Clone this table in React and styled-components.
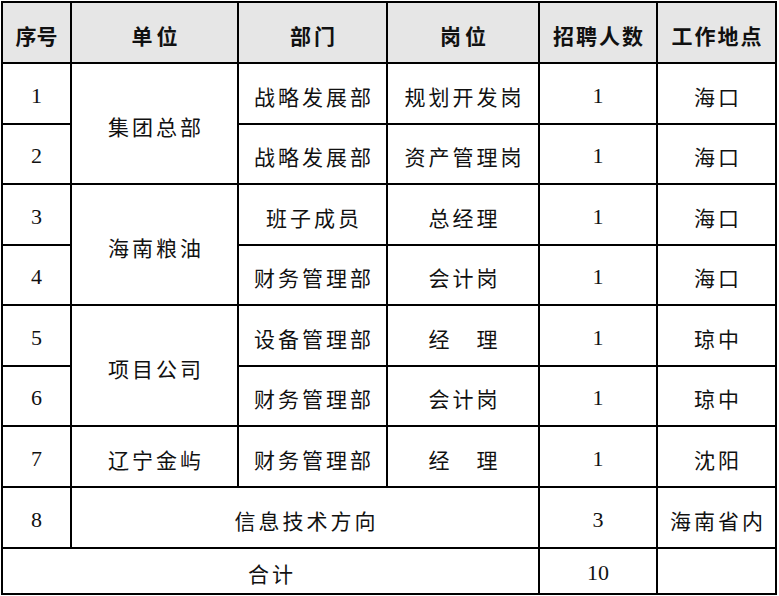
import React from 'react'
import styled, { createGlobalStyle } from 'styled-components';

const GlobalStyle = createGlobalStyle`
    html, body { margin: 0; padding: 0; background: #fff; }
    body { font-family: "Liberation Serif", "Noto Sans CJK SC", serif; color: #111; }
`;

const rows = [
    { no: '1', unit: '集团总部', span: 2, dept: '战略发展部', post: '规划开发岗', count: '1', place: '海口' },
    { no: '2', dept: '战略发展部', post: '资产管理岗', count: '1', place: '海口' },
    { no: '3', unit: '海南粮油', span: 2, dept: '班子成员', post: '总经理', count: '1', place: '海口' },
    { no: '4', dept: '财务管理部', post: '会计岗', count: '1', place: '海口' },
    { no: '5', unit: '项目公司', span: 2, dept: '设备管理部', post: '经　理', count: '1', place: '琼中' },
    { no: '6', dept: '财务管理部', post: '会计岗', count: '1', place: '琼中' },
    { no: '7', unit: '辽宁金屿', span: 1, dept: '财务管理部', post: '经　理', count: '1', place: '沈阳' },
];

export default function App() {
    return (
        <Page>
            <GlobalStyle />
            <Table>
                <colgroup>
                    <col style={{ width: 69 }} />
                    <col style={{ width: 167 }} />
                    <col style={{ width: 149 }} />
                    <col style={{ width: 152 }} />
                    <col style={{ width: 118 }} />
                    <col style={{ width: 119 }} />
                </colgroup>
                <thead>
                    <Row $h={61}>
                        <HeadCell $gap={0}>序号</HeadCell>
                        <HeadCell $gap={4}>单位</HeadCell>
                        <HeadCell $gap={3}>部门</HeadCell>
                        <HeadCell $gap={4}>岗位</HeadCell>
                        <HeadCell $gap={2}>招聘人数</HeadCell>
                        <HeadCell $gap={2}>工作地点</HeadCell>
                    </Row>
                </thead>
                <tbody>
                    {rows.map((r, i) => (
                        <Row key={r.no} $h={i % 2 === 0 ? 61 : 60}>
                            <NumCell>{r.no}</NumCell>
                            {r.unit && <Cell rowSpan={r.span}>{r.unit}</Cell>}
                            <Cell>{r.dept}</Cell>
                            <Cell>{r.post}</Cell>
                            <NumCell>{r.count}</NumCell>
                            <Cell>{r.place}</Cell>
                        </Row>
                    ))}
                    <Row $h={61}>
                        <NumCell>8</NumCell>
                        <Cell colSpan={3}>信息技术方向</Cell>
                        <NumCell>3</NumCell>
                        <Cell>海南省内</Cell>
                    </Row>
                    <Row $h={46}>
                        <Cell colSpan={4}>合计</Cell>
                        <NumCell>10</NumCell>
                        <Cell />
                    </Row>
                </tbody>
            </Table>
        </Page>
    )
}

const Page = styled.div`
    padding: 1px 0 0 1px;
`;

const Table = styled.table`
    border-collapse: collapse;
    table-layout: fixed;
    width: 775px;
`;

const Row = styled.tr`
    height: ${p => p.$h}px;
`;

const HeadCell = styled.th`
    border: 2px solid #000;
    background: #e6e6e6;
    padding: 4px 0 0 ${p => p.$gap}px;
    font-family: "Noto Sans CJK SC", serif;
    font-size: 21px;
    font-weight: 700;
    letter-spacing: ${p => p.$gap}px;
    text-align: center;
    vertical-align: middle;
    color: #111;
`;

const Cell = styled.td`
    border: 2px solid #000;
    padding: 4px 0 0 3px;
    font-family: "Noto Sans CJK SC", serif;
    font-size: 21px;
    font-weight: 400;
    letter-spacing: 3px;
    text-align: center;
    vertical-align: middle;
    color: #111;
`;

const NumCell = styled.td`
    border: 2px solid #000;
    padding: 4px 0 0;
    font-family: "Liberation Serif", serif;
    font-size: 22px;
    text-align: center;
    vertical-align: middle;
    color: #111;
`;
